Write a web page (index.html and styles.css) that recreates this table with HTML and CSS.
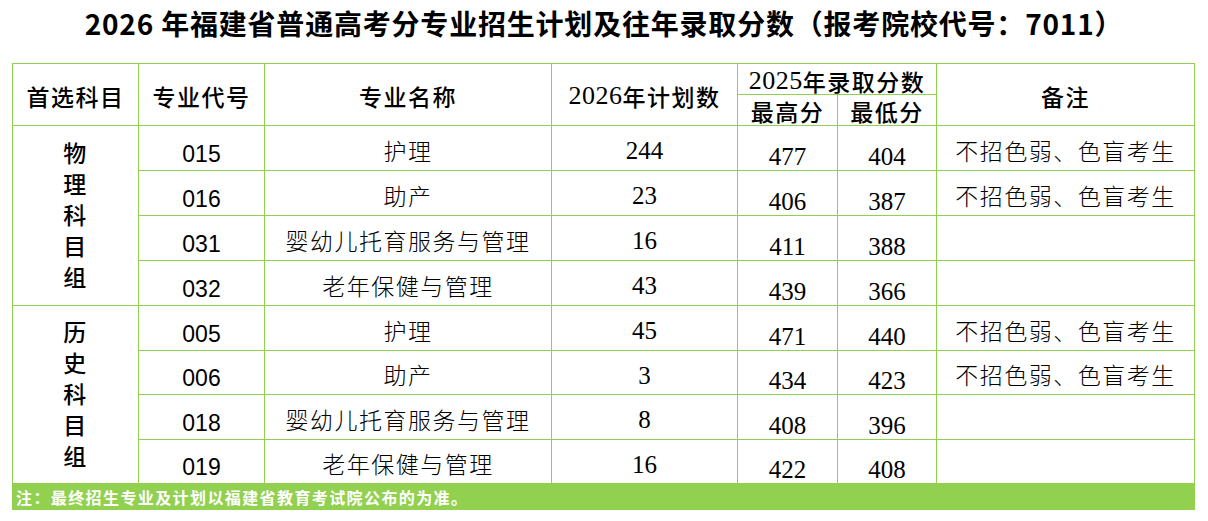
FILE: index.html
```html
<!DOCTYPE html>
<html lang="zh-CN">
<head>
<meta charset="utf-8">
<title>2026年福建省普通高考分专业招生计划</title>
<link rel="stylesheet" href="styles.css">
</head>
<body>
<h1 class="title">2026 年福建省普通高考分专业招生计划及往年录取分数（报考院校代号：7011）</h1>
<div class="sheet">
  <div class="c hd r2">首选科目</div>
  <div class="c hd r2">专业代号</div>
  <div class="c hd r2">专业名称</div>
  <div class="c hd r2"><span class="num">2026</span>年计划数</div>
  <div class="c hd sp2 top"><span class="num">2025</span>年录取分数</div>
  <div class="c hd r2">备注</div>
  <div class="c hd sub">最高分</div>
  <div class="c hd sub">最低分</div>

  <div class="c grp r4">物<br>理<br>科<br>目<br>组</div>
  <div class="c code">015</div><div class="c name">护理</div><div class="c plan">244</div><div class="c score">477</div><div class="c score">404</div><div class="c note">不招色弱、色盲考生</div>
  <div class="c code">016</div><div class="c name">助产</div><div class="c plan">23</div><div class="c score">406</div><div class="c score">387</div><div class="c note">不招色弱、色盲考生</div>
  <div class="c code">031</div><div class="c name">婴幼儿托育服务与管理</div><div class="c plan">16</div><div class="c score">411</div><div class="c score">388</div><div class="c note"></div>
  <div class="c code">032</div><div class="c name">老年保健与管理</div><div class="c plan">43</div><div class="c score">439</div><div class="c score">366</div><div class="c note"></div>

  <div class="c grp r4">历<br>史<br>科<br>目<br>组</div>
  <div class="c code">005</div><div class="c name">护理</div><div class="c plan">45</div><div class="c score">471</div><div class="c score">440</div><div class="c note">不招色弱、色盲考生</div>
  <div class="c code">006</div><div class="c name">助产</div><div class="c plan">3</div><div class="c score">434</div><div class="c score">423</div><div class="c note">不招色弱、色盲考生</div>
  <div class="c code">018</div><div class="c name">婴幼儿托育服务与管理</div><div class="c plan">8</div><div class="c score">408</div><div class="c score">396</div><div class="c note"></div>
  <div class="c code">019</div><div class="c name">老年保健与管理</div><div class="c plan">16</div><div class="c score">422</div><div class="c score">408</div><div class="c note"></div>

  <div class="foot">注：最终招生专业及计划以福建省教育考试院公布的为准。</div>
</div>
</body>
</html>
```
FILE: styles.css
```css
html, body {
  margin: 0;
  padding: 0;
  background: #fff;
}

.title {
  margin: 0 0 17px;
  line-height: 46px;
  text-align: center;
  font-family: "Noto Sans CJK SC", sans-serif;
  font-weight: 700;
  font-size: 28px;
  letter-spacing: 0.8px;
  color: #000;
}

.sheet {
  display: grid;
  grid-template-columns: 125px 125px 286px 185px 99px 98px 257px;
  grid-template-rows: 30px 30px 44px 44px 44px 44px 44px 43px 44px 43px 25px;
  gap: 1px;
  padding: 1px;
  width: max-content;
  margin-left: 12px;
  background: #92d050;
}

.c {
  background: #fff;
  display: flex;
  align-items: center;
  justify-content: center;
  text-align: center;
  color: #000;
  font-family: "Liberation Serif", "Noto Sans CJK SC", serif;
  font-size: 23px;
  letter-spacing: 1.5px;
  box-sizing: border-box;
  white-space: nowrap;
}

.hd {
  font-weight: 500;
  padding-top: 3px;
}

.num {
  font-size: 26px;
  letter-spacing: 0.5px;
}

.r2 { grid-row: span 2; }
.r4 { grid-row: span 4; }
.sp2 { grid-column: span 2; }
.top { padding-top: 4px; }
.sub { padding-top: 2px; }

.grp {
  font-weight: 500;
  line-height: 31px;
  font-size: 23px;
  padding-top: 2px;
}

.code {
  font-family: "Liberation Sans", sans-serif;
  font-size: 23px;
  letter-spacing: 0;
  padding-top: 12px;
}

.name, .note {
  font-weight: 300;
  padding-top: 3px;
}

.plan {
  font-size: 25px;
  letter-spacing: 0;
  padding-top: 6px;
}

.score {
  font-size: 25px;
  letter-spacing: 0;
  padding-top: 17px;
}

.foot {
  grid-column: 1 / -1;
  display: flex;
  align-items: center;
  padding-left: 3px;
  color: #fff;
  font-family: "Noto Sans CJK SC", sans-serif;
  font-weight: 700;
  font-size: 16px;
  letter-spacing: 1.4px;
}
```
